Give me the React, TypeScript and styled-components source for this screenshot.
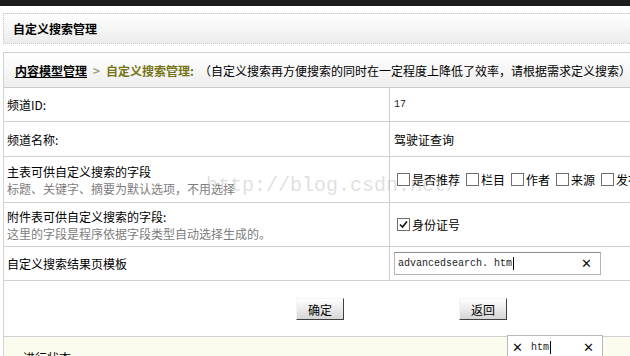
import styled, { createGlobalStyle } from 'styled-components';

const GlobalStyle = createGlobalStyle`
  html, body {
    margin: 0;
    padding: 0;
    background: #ffffff;
    overflow: hidden;
  }
  body {
    font-family: "Noto Sans CJK SC", "Liberation Sans", sans-serif;
    font-size: 12px;
    color: #000;
  }
`;

const Page = styled.div`
  position: relative;
  width: 630px;
  height: 356px;
  overflow: hidden;
`;

const TopBar = styled.div`
  height: 6px;
  background: #1c1c1c;
`;

const TitlePanel = styled.div`
  margin: 7px 0 0 3px;
  height: 29px;
  display: flex;
  align-items: center;
  padding-left: 9px;
  border: 1px dotted #c8c8b4;
  border-right: none;
  background: linear-gradient(#ffffff, #ececec);
  font-weight: bold;
  font-size: 12px;
`;

const Content = styled.div`
  margin: 8px 0 0 3px;
  border-left: 1px solid #d4d4d4;
`;

const Crumbs = styled.div`
  height: 34px;
  display: flex;
  align-items: center;
  padding-left: 11px;
  border-top: 1px solid #cccccc;
  border-bottom: 1px solid #cccccc;
  background: linear-gradient(#ffffff, #eeeeee);
  white-space: nowrap;
`;

const CrumbLink = styled.span`
  font-weight: bold;
  text-decoration: underline;
  color: #000;
`;

const CrumbSep = styled.span`
  color: #a0a080;
  font-weight: bold;
  margin: 0 6px;
`;

const CrumbCurrent = styled.span`
  font-weight: bold;
  color: #747414;
  margin-right: 5px;
`;

const Row = styled.div<{ $h: number }>`
  display: grid;
  grid-template-columns: 385px 1fr;
  height: ${(p) => p.$h}px;
  border-bottom: 1px solid #d0d0d0;
`;

const LabelCell = styled.div`
  display: flex;
  flex-direction: column;
  justify-content: center;
  padding-left: 3px;
  line-height: 17px;
`;

const Hint = styled.div`
  color: #7d7d7d;
`;

const ValueCell = styled.div<{ $pad?: number }>`
  display: flex;
  align-items: center;
  padding-left: ${(p) => p.$pad ?? 4}px;
  border-left: 1px solid #d0d0d0;
  white-space: nowrap;
`;

const Latin = styled.span`
  font-family: "Liberation Mono", monospace;
  font-size: 10px;
  color: #222;
`;

const Check = styled.span`
  display: inline-flex;
  align-items: center;
  margin-right: 6px;
`;

const Box = styled.span`
  width: 11px;
  height: 11px;
  border: 1px solid #6f6f6f;
  background: #fff;
  margin-right: 2px;
  display: inline-flex;
  align-items: center;
  justify-content: center;
`;

const TextBox = styled.div`
  width: 207px;
  height: 23px;
  border: 1px solid #b4b4b4;
  border-top-color: #8c8c8c;
  display: flex;
  align-items: center;
  padding-left: 3px;
  box-sizing: border-box;
  background: #fff;
`;

const Caret = styled.span`
  display: inline-block;
  width: 1px;
  height: 13px;
  background: #000;
  vertical-align: middle;
  margin-left: 1px;
`;

const Clear = styled.span<{ $lead?: boolean }>`
  margin-left: ${(p) => (p.$lead ? '0' : 'auto')};
  margin-right: 8px;
  font-family: "DejaVu Sans", sans-serif;
  font-size: 13px;
  color: #111;
`;

const ButtonRow = styled.div`
  height: 56px;
  display: flex;
  align-items: flex-start;
  padding-top: 17px;
  box-sizing: border-box;
  border-bottom: 1px solid #d0d0d0;
`;

const Button = styled.button<{ $left: number }>`
  margin-left: ${(p) => p.$left}px;
  width: 48px;
  height: 22px;
  padding: 0;
  font-family: inherit;
  font-size: 12px;
  color: #000;
  background: linear-gradient(#ffffff, #d6d6d6);
  border: 1px solid;
  border-color: #f4f4f4 #404040 #404040 #f4f4f4;
`;

const StatusRow = styled.div`
  height: 30px;
  background: #fbfbee;
  padding: 12px 0 0 19px;
  box-sizing: border-box;
`;

const FloatBox = styled.div`
  position: absolute;
  left: 507px;
  top: 335px;
  width: 96px;
  height: 24px;
  border: 1px solid #b8b8b8;
  background: #fff;
  display: flex;
  align-items: center;
  padding-left: 4px;
  box-sizing: border-box;
`;

const Watermark = styled.div`
  position: absolute;
  left: 206px;
  top: 174px;
  font-family: "Liberation Mono", monospace;
  font-size: 20px;
  color: rgba(185, 185, 185, 0.45);
  pointer-events: none;
  white-space: nowrap;
`;

const CheckMark = () => (
  <svg width="9" height="9" viewBox="0 0 9 9">
    <path d="M1 4.5 L3.5 7 L8 1.5" fill="none" stroke="#111" strokeWidth="1.6" />
  </svg>
);

const fields = ['是否推荐', '栏目', '作者', '来源', '发布时间'];

export default function App() {
  return (
    <Page>
      <GlobalStyle />
      <TopBar />
      <TitlePanel>自定义搜索管理</TitlePanel>
      <Content>
        <Crumbs>
          <CrumbLink>内容模型管理</CrumbLink>
          <CrumbSep>&gt;</CrumbSep>
          <CrumbCurrent>自定义搜索管理:</CrumbCurrent>
          <span>（自定义搜索再方便搜索的同时在一定程度上降低了效率，请根据需求定义搜索）</span>
        </Crumbs>
        <Row $h={33}>
          <LabelCell>频道ID:</LabelCell>
          <ValueCell>
            <Latin>17</Latin>
          </ValueCell>
        </Row>
        <Row $h={34}>
          <LabelCell>频道名称:</LabelCell>
          <ValueCell>驾驶证查询</ValueCell>
        </Row>
        <Row $h={45}>
          <LabelCell>
            <div>主表可供自定义搜索的字段</div>
            <Hint>标题、关键字、摘要为默认选项，不用选择</Hint>
          </LabelCell>
          <ValueCell $pad={7}>
            {fields.map((f) => (
              <Check key={f}>
                <Box />
                {f}
              </Check>
            ))}
          </ValueCell>
        </Row>
        <Row $h={43}>
          <LabelCell>
            <div>附件表可供自定义搜索的字段:</div>
            <Hint>这里的字段是程序依据字段类型自动选择生成的。</Hint>
          </LabelCell>
          <ValueCell $pad={7}>
            <Check>
              <Box>
                <CheckMark />
              </Box>
              身份证号
            </Check>
          </ValueCell>
        </Row>
        <Row $h={33}>
          <LabelCell>自定义搜索结果页模板</LabelCell>
          <ValueCell>
            <TextBox>
              <Latin>advancedsearch. htm</Latin>
              <Caret />
              <Clear>✕</Clear>
            </TextBox>
          </ValueCell>
        </Row>
        <ButtonRow>
          <Button $left={292}>确定</Button>
          <Button $left={115}>返回</Button>
        </ButtonRow>
        <StatusRow>进行状态:</StatusRow>
      </Content>
      <Watermark>http://blog.csdn.net/</Watermark>
      <FloatBox>
        <Clear $lead>✕</Clear>
        <Latin>htm</Latin>
        <Caret />
        <Clear>✕</Clear>
      </FloatBox>
    </Page>
  );
}
